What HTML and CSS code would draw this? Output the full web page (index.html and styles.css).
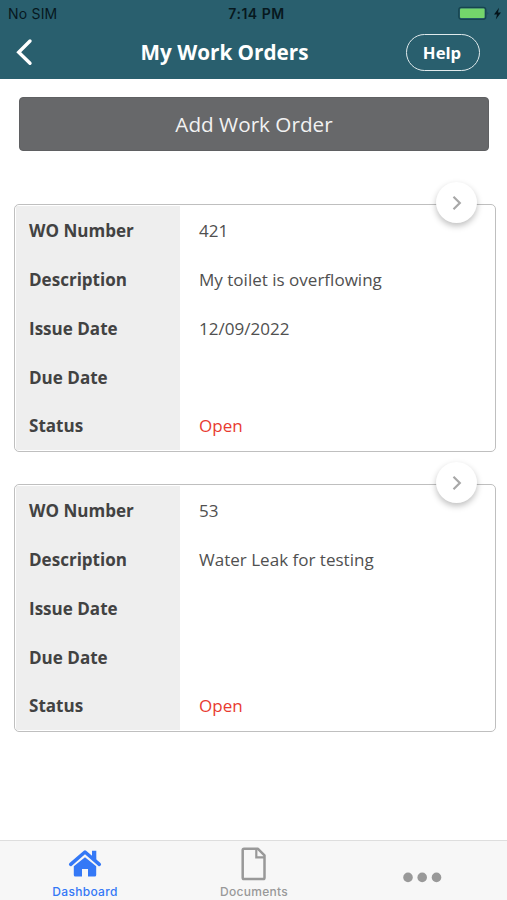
FILE: index.html
```html
<!DOCTYPE html>
<html lang="en">
<head>
<meta charset="utf-8">
<title>My Work Orders</title>
<link rel="stylesheet" href="styles.css">
</head>
<body>
<div class="app">
  <header class="header">
    <div class="status-bar">
      <span class="carrier">No SIM</span>
      <span class="time">7:14 PM</span>
      <span class="power">
        <svg width="45" height="16" viewBox="0 0 45 16">
          <rect x="0.8" y="1.3" width="27" height="12" rx="2.5" fill="none" stroke="#17444f" stroke-width="1.3"/>
          <rect x="2" y="2.5" width="24.6" height="9.6" rx="1" fill="#74d66b"/>
          <path d="M29.6 5.7q1.4 1.4 0 3.4z" fill="#17444f"/>
          <path d="M41 1.8L36 8.6h3l-1.2 5L43 6.6h-3z" fill="#05141a"/>
        </svg>
      </span>
    </div>
    <nav class="nav">
      <a class="back" aria-label="Back"><svg width="18" height="28" viewBox="0 0 18 28"><path d="M15 3L3.7 14.2L15 25.3" fill="none" stroke="#fff" stroke-width="3.4" stroke-linecap="round"/></svg></a>
      <h1 class="title">My Work Orders</h1>
      <button class="help">Help</button>
    </nav>
  </header>
  <main class="content">
    <button class="add">Add Work Order</button>
    <section class="card">
      <a class="open-card" aria-label="Open"><svg width="12" height="18" viewBox="0 0 12 18"><path d="M2.5 2.8L8.8 9L2.5 15.2" fill="none" stroke="#a8a8a8" stroke-width="2.2"/></svg></a>
      <dl class="fields">
        <dt>WO Number</dt><dd>421</dd>
        <dt>Description</dt><dd>My toilet is overflowing</dd>
        <dt>Issue Date</dt><dd>12/09/2022</dd>
        <dt>Due Date</dt><dd></dd>
        <dt>Status</dt><dd class="open">Open</dd>
      </dl>
    </section>
    <section class="card">
      <a class="open-card" aria-label="Open"><svg width="12" height="18" viewBox="0 0 12 18"><path d="M2.5 2.8L8.8 9L2.5 15.2" fill="none" stroke="#a8a8a8" stroke-width="2.2"/></svg></a>
      <dl class="fields">
        <dt>WO Number</dt><dd>53</dd>
        <dt>Description</dt><dd>Water Leak for testing</dd>
        <dt>Issue Date</dt><dd></dd>
        <dt>Due Date</dt><dd></dd>
        <dt>Status</dt><dd class="open">Open</dd>
      </dl>
    </section>
  </main>
  <footer class="tabs">
    <a class="tab active">
      <svg width="34" height="34" viewBox="0 0 34 34">
        <path d="M2.7 17.3L17 5L31.3 17.3" fill="none" stroke="#3478f6" stroke-width="3.5" stroke-linecap="round" stroke-linejoin="round"/>
        <path d="M24 3.8h4.3v10L24 10.1z" fill="#3478f6"/>
        <path d="M17 10.2L28.2 19.2V28.1q0 1.5-1.5 1.5H20v-7.5H14V29.6H7.3q-1.5 0-1.5-1.5V19.2z" fill="#3478f6"/>
      </svg>
      <span>Dashboard</span>
    </a>
    <a class="tab">
      <svg width="34" height="34" viewBox="0 0 34 34">
        <path d="M7 1.8H21L27.5 8.3V30.7q0 1.3-1.3 1.3H7q-1.3 0-1.3-1.3V3.1q0-1.3 1.3-1.3z" fill="none" stroke="#999" stroke-width="2.5" stroke-linejoin="round"/>
        <path d="M19.3 2v8.3h8" fill="none" stroke="#999" stroke-width="2.2"/>
      </svg>
      <span>Documents</span>
    </a>
    <a class="tab more" aria-label="More">
      <svg width="40" height="12" viewBox="0 0 40 12" fill="#999"><circle cx="5" cy="6.4" r="4.8"/><circle cx="19.2" cy="6.4" r="4.8"/><circle cx="33.5" cy="6.4" r="4.8"/></svg>
    </a>
  </footer>
</div>
</body>
</html>
```
FILE: styles.css
```css
* { box-sizing: border-box; }
body { margin: 0; background: #fff; font-family: "Open Sans", sans-serif; color: #444; }
button { font-family: inherit; padding: 0; }
svg { display: block; }
.app { height: 900px; display: flex; flex-direction: column; overflow: hidden; }
.header { height: 79px; background: #295f6e; flex: none; }
.status-bar { height: 27px; padding: 0 5px 0 8px; display: grid; grid-template-columns: 1fr auto 1fr; align-items: center; font-family: Inter, sans-serif; font-size: 14px; color: #07181e; }
.carrier { letter-spacing: 0.2px; }
.time { font-weight: 600; letter-spacing: 0.5px; padding-left: 3px; }
.power { justify-self: end; margin-right: -1px; }
.nav { height: 50px; display: grid; grid-template-columns: 100px 1fr 101px; align-items: center; color: #fff; }
.back { padding-left: 15px; }
.title { margin: 0 0 0 -57px; font-size: 20.7px; line-height: 28px; font-weight: 700; text-align: center; white-space: nowrap; }
.help { width: 74px; height: 37px; border: 1.5px solid #e0eaec; border-radius: 19px; background: none; color: #fff; font-size: 16.7px; font-weight: 700; text-indent: -2px; }
.content { flex: 1; padding: 18px 11px 0 14px; }
.add { display: block; width: 470px; height: 54px; margin: 0 0 53px 5px; border: 1px solid #5f6062; border-radius: 4px; background: #67686a; color: #f2f2f2; font-size: 20.7px; }
.card { position: relative; width: 482px; height: 248px; margin-bottom: 32px; border: 1px solid #bfbfbf; border-radius: 5px; padding: 1px; }
.fields { margin: 0; display: grid; grid-template-columns: 164px 1fr; grid-auto-rows: 48.85px; line-height: 50.5px; font-size: 17.05px; }
dt { background: #eee; padding-left: 13px; font-weight: 700; color: #424242; }
dd { margin: 0; padding-left: 19px; color: #505050; }
dd.open { color: #e83a30; }
.open-card { position: absolute; right: 18px; top: -23px; width: 41px; height: 41px; border-radius: 50%; background: #fff; box-shadow: 0 3px 6px rgba(0,0,0,.25); display: flex; align-items: center; justify-content: center; }
.tabs { height: 60px; flex: none; border-top: 1px solid #dedede; background: #f7f7f7; display: grid; grid-template-columns: repeat(3, 1fr); }
.tab { display: flex; flex-direction: column; align-items: center; padding-top: 6px; font: 500 12px/16px Inter, sans-serif; letter-spacing: 0.3px; color: #999; }
.tab span { margin-top: 3px; padding-left: 1px; }
.active { color: #3478f6; }
.more { padding-top: 30px; }
```
